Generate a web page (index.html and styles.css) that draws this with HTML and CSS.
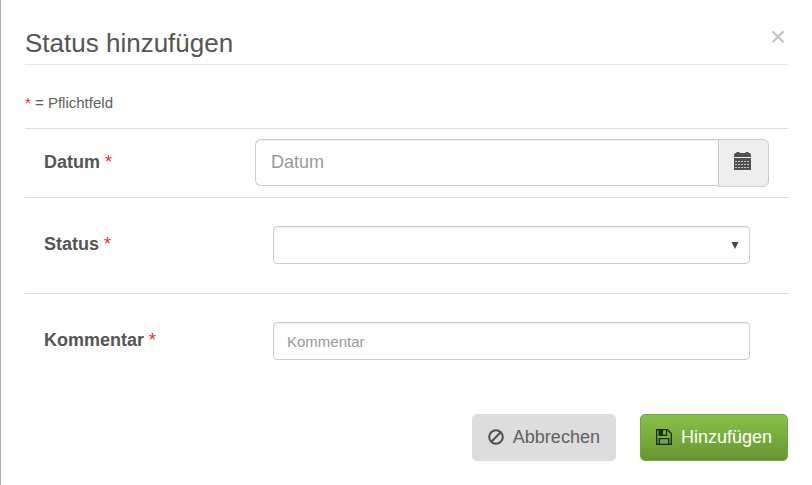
FILE: index.html
```html
<!DOCTYPE html>
<html lang="de">
<head>
<meta charset="utf-8">
<title>Status hinzufügen</title>
<link rel="stylesheet" href="styles.css">
</head>
<body>
<main class="dialog">
  <header class="dialog-header">
    <h1 class="dialog-title">Status hinzufügen</h1>
    <button class="close" type="button" aria-label="Schließen">×</button>
  </header>
  <form class="form">
    <p class="hint"><span class="required">*</span> = Pflichtfeld</p>
    <div class="row row-date">
      <label class="label" for="datum">Datum <span class="required">*</span></label>
      <div class="input-group">
        <input class="input input-large" id="datum" type="text" placeholder="Datum">
        <button class="addon" type="button" aria-label="Kalender">
          <svg width="17" height="18" viewBox="0 0 17 18" fill="#505050">
            <path d="M0 5V3Q0 1 2 1H2.500V0H5.500V1H11.500V0H14.500V1H15Q17 1 17 3V5Z"/>
            <path d="M0 6H17V18H0Z"/>
            <path d="M1 9.500H16M1 12.500H16M1 15.500H16" stroke="#c4c4c4" stroke-width="1" stroke-dasharray="2 1"/>
          </svg>
        </button>
      </div>
    </div>
    <div class="row">
      <label class="label" for="status">Status <span class="required">*</span></label>
      <div class="field">
        <select class="input" id="status"><option></option></select>
        <svg class="arrow" width="8" height="7" viewBox="0 0 8 7" fill="#484848"><path d="M.5 0H7.500L4 7Z"/></svg>
      </div>
    </div>
    <div class="row">
      <label class="label" for="kommentar">Kommentar <span class="required">*</span></label>
      <div class="field">
        <input class="input" id="kommentar" type="text" placeholder="Kommentar">
      </div>
    </div>
    <div class="actions">
      <button class="button button-cancel" type="button">
        <svg width="16" height="16" viewBox="0 0 16 16" fill="none" stroke="#505050" stroke-width="2"><circle cx="8" cy="8" r="6.800"/><path d="M3.300 12.700L12.700 3.300"/></svg>
        Abbrechen
      </button>
      <button class="button button-submit" type="submit">
        <svg width="16" height="16" viewBox="0 0 16 16" fill="none" stroke="#172b08" stroke-width="1.300"><path d="M.7.7H11.500L15.300 4.500V15.300H.7Z"/><path d="M3.300 15V9.700H12.700V15M3.300.7V6.300H10.500V.7"/><path d="M3.500 1H7V6H3.500Z" fill="#172b08" stroke="none"/></svg>
        Hinzufügen
      </button>
    </div>
  </form>
</main>
</body>
</html>
```
FILE: styles.css
```css
* {
  box-sizing: border-box;
}

body {
  margin: 0;
  background: #fff;
  color: #555;
  font-family: "Liberation Sans", Arial, sans-serif;
}

.dialog {
  min-height: 100vh;
  padding: 20px 24px 24px;
  border-left: 1px solid #adafb2;
}

.dialog-header {
  display: flex;
  justify-content: space-between;
  align-items: flex-start;
  height: 45px;
  border-bottom: 1px solid #e5e5e5;
}

.dialog-title {
  margin: 0;
  padding-top: 8px;
  font-size: 26px;
  font-weight: 400;
  line-height: 30px;
}

.close {
  padding: 0 2px;
  border: 0;
  background: none;
  color: #c4c4c4;
  font: 28px/34px "Liberation Sans", Arial, sans-serif;
}

.hint {
  margin: 0;
  padding: 28px 0 15px;
  color: #606060;
  font-size: 15px;
  line-height: 20px;
}

.required {
  color: #f22;
  font-weight: 400;
}

.row {
  display: grid;
  grid-template-columns: 211px 1fr;
  align-items: center;
  padding: 28px 19px 29px;
  border-top: 1px solid #ddd;
}

.row-date {
  padding-top: 10px;
  padding-bottom: 10px;
}

.label {
  padding-bottom: 2px;
  font-size: 18px;
  font-weight: 700;
  line-height: 20px;
}

.field {
  position: relative;
  margin: 0 19px 0 18px;
}

.input {
  display: block;
  width: 100%;
  height: 38px;
  padding: 0 13px;
  border: 1px solid #ccc;
  border-radius: 4px;
  background: #fff;
  box-shadow: inset 0 1px 1px rgba(0, 0, 0, 0.08);
  color: #555;
  font: 15px/20px "Liberation Sans", Arial, sans-serif;
  appearance: none;
}

.input::placeholder {
  color: #999;
  opacity: 1;
}

.arrow {
  position: absolute;
  top: 16px;
  right: 11px;
  pointer-events: none;
}

.input-group {
  display: flex;
}

.input-large {
  flex: 1;
  width: auto;
  min-width: 0;
  height: 47px;
  padding: 0 15px;
  border-right: 0;
  border-radius: 6px 0 0 6px;
  font-size: 18px;
}

.addon {
  display: flex;
  align-items: center;
  justify-content: center;
  width: 51px;
  height: 48px;
  padding: 0 2px 4px 0;
  border: 1px solid #ccc;
  border-radius: 0 6px 6px 0;
  background: #eee;
}

.actions {
  display: flex;
  justify-content: flex-end;
  gap: 24px;
  padding-top: 25px;
}

.button {
  display: flex;
  align-items: center;
  gap: 9px;
  height: 47px;
  padding: 0 15px 2px;
  border: 1px solid #ddd;
  border-radius: 5px;
  font: 18px/24px "Liberation Sans", Arial, sans-serif;
}

.button-cancel {
  background: #ddd;
  color: #606060;
}

.button-submit {
  border-color: #6fa53a;
  background: linear-gradient(#88c149, #66972f);
  color: #fff;
}
```
